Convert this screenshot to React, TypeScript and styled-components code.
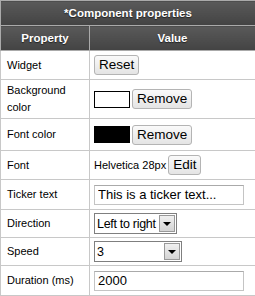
import React from "react";
import styled, { createGlobalStyle } from "styled-components";

const GlobalStyle = createGlobalStyle`
  html, body { margin: 0; padding: 0; background: #fff; }
  body { font-family: "Liberation Sans", Arial, sans-serif; }
`;

const Table = styled.table`
  width: 255px;
  border-collapse: collapse;
  table-layout: fixed;
  font-family: "Liberation Sans", Arial, sans-serif;
  font-size: 11px;
  color: #000;
`;

const HeadCell = styled.th<{ $h: number }>`
  height: ${(p) => p.$h - 1}px;
  padding: 0;
  background: linear-gradient(#5a5a5a, #434343);
  color: #fff;
  font-size: 11.5px;
  font-weight: bold;
  text-align: center;
  text-shadow: 0 1px 1px #222;
  border: 1px solid #aaa;
`;

const Row = styled.tr<{ $h: number }>`
  height: ${(p) => p.$h}px;
`;

const Label = styled.td`
  padding: 0 0 0 6px;
  border: 1px solid #c8c8c8;
  vertical-align: middle;
  line-height: 17px;
`;

const Value = styled.td`
  padding: 0 0 0 4px;
  border: 1px solid #c8c8c8;
  vertical-align: middle;
  white-space: nowrap;
`;

const Inline = styled.div`
  display: flex;
  align-items: center;
  gap: 2px;
`;

const Button = styled.button`
  height: 20px;
  padding: 0 4px;
  border: 1px solid #b4b4b4;
  border-radius: 3px;
  background: linear-gradient(#fafafa, #e4e4e4);
  font-family: "Liberation Sans", Arial, sans-serif;
  font-size: 13.5px;
  line-height: 18px;
  color: #000;
`;

const Swatch = styled.span<{ $color: string }>`
  display: inline-block;
  width: 34px;
  height: 15px;
  border: 1px solid #000;
  background: ${(p) => p.$color};
`;

const TextInput = styled.input`
  box-sizing: border-box;
  width: 150px;
  height: 20px;
  padding: 0 3px;
  border: 1px solid #c4c4c4;
  border-top-color: #aaa;
  font-family: "Liberation Sans", Arial, sans-serif;
  font-size: 13px;
  color: #000;
`;

const Select = styled.div<{ $w: number }>`
  box-sizing: border-box;
  display: inline-flex;
  align-items: center;
  gap: 1px;
  width: ${(p) => p.$w}px;
  height: 21px;
  padding: 0 1px 0 2px;
  border: 1px solid #7f7f7f;
  white-space: nowrap;
`;

const SelectText = styled.span`
  flex: 1;
  min-width: 0;
  font-size: 12.5px;
  letter-spacing: -0.3px;
`;

const Arrow = styled.span`
  box-sizing: border-box;
  flex-shrink: 0;
  width: 16px;
  height: 17px;
  display: flex;
  align-items: center;
  justify-content: center;
  border: 1px solid #999;
  background: linear-gradient(#f0f0f0, #d4d4d4);
  &::after {
    content: "";
    border-left: 4px solid transparent;
    border-right: 4px solid transparent;
    border-top: 4px solid #000;
  }
`;

export default function App() {
  return (
    <>
      <GlobalStyle />
      <Table>
        <colgroup>
          <col style={{ width: 89 }} />
          <col style={{ width: 166 }} />
        </colgroup>
        <thead>
          <tr>
            <HeadCell $h={25} colSpan={2}>*Component properties</HeadCell>
          </tr>
          <tr>
            <HeadCell $h={25}>Property</HeadCell>
            <HeadCell $h={25}>Value</HeadCell>
          </tr>
        </thead>
        <tbody>
          <Row $h={29}>
            <Label>Widget</Label>
            <Value>
              <Button>Reset</Button>
            </Value>
          </Row>
          <Row $h={39}>
            <Label>Background color</Label>
            <Value>
              <Inline>
                <Swatch $color="#fff" />
                <Button>Remove</Button>
              </Inline>
            </Value>
          </Row>
          <Row $h={32}>
            <Label>Font color</Label>
            <Value>
              <Inline>
                <Swatch $color="#000" />
                <Button>Remove</Button>
              </Inline>
            </Value>
          </Row>
          <Row $h={29}>
            <Label>Font</Label>
            <Value>
              <Inline>
                <span>Helvetica 28px</span>
                <Button>Edit</Button>
              </Inline>
            </Value>
          </Row>
          <Row $h={30}>
            <Label>Ticker text</Label>
            <Value>
              <TextInput defaultValue="This is a ticker text..." />
            </Value>
          </Row>
          <Row $h={28}>
            <Label>Direction</Label>
            <Value>
              <Select $w={83}>
                <SelectText>Left to right</SelectText>
                <Arrow />
              </Select>
            </Value>
          </Row>
          <Row $h={28}>
            <Label>Speed</Label>
            <Value>
              <Select $w={88}>
                <SelectText>3</SelectText>
                <Arrow />
              </Select>
            </Value>
          </Row>
          <Row $h={30}>
            <Label>Duration (ms)</Label>
            <Value>
              <TextInput defaultValue="2000" />
            </Value>
          </Row>
        </tbody>
      </Table>
    </>
  );
}
